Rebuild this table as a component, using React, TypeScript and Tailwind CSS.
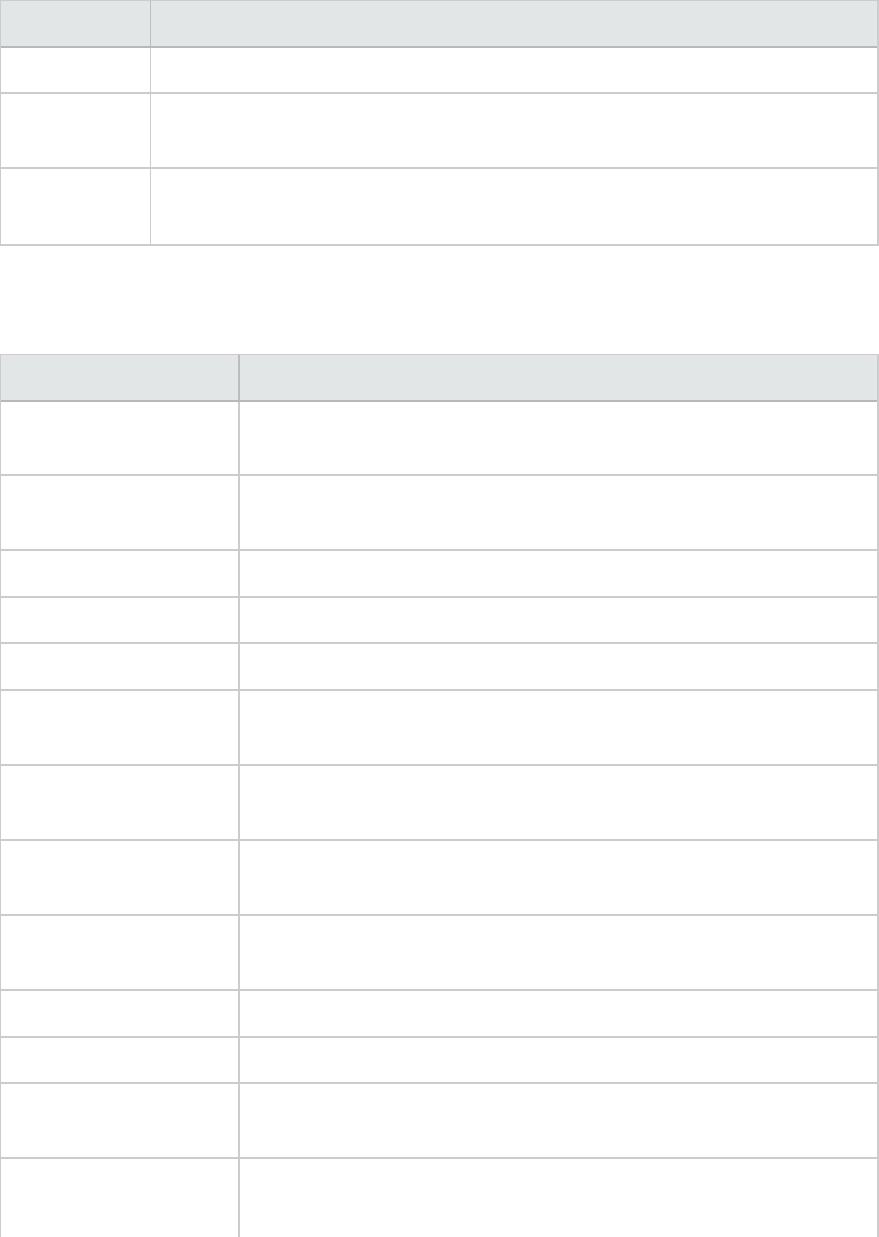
import React from "react";

const firstTable = [46, 75, 75];
const secondTable = [74, 75, 47, 46, 47, 75, 75, 75, 75, 47, 46, 75, 100];

function Table({
  colClass,
  headColClass,
  rows,
}: {
  colClass: string;
  headColClass: string;
  rows: number[];
}) {
  return (
    <div className="w-full border-t border-l border-r-2 border-b-2 border-[#cccccc] bg-white">
      <div className="flex h-[47px] border-b-2 border-[#b8b8b8] bg-[#e3e6e7]">
        <div className={headColClass}></div>
        <div className="flex-1"></div>
      </div>
      {rows.map((h, i) => (
        <div
          key={i}
          className={i === rows.length - 1 ? "flex" : "flex border-b-2 border-[#cccccc]"}
          style={{ height: h }}
        >
          <div className={colClass}></div>
          <div className="flex-1"></div>
        </div>
      ))}
    </div>
  );
}

export default function App() {
  return (
    <div className="w-[879px] bg-white font-['Liberation_Sans',sans-serif]">
      <Table
        headColClass="w-[150px] shrink-0 border-r border-[#bdbdbd]"
        colClass="w-[150px] shrink-0 border-r border-[#cccccc]"
        rows={firstTable}
      />
      <div className="h-[108px]"></div>
      <Table
        headColClass="w-[239px] shrink-0 border-r-2 border-[#bdbdbd]"
        colClass="w-[239px] shrink-0 border-r-2 border-[#cccccc]"
        rows={secondTable}
      />
    </div>
  );
}
